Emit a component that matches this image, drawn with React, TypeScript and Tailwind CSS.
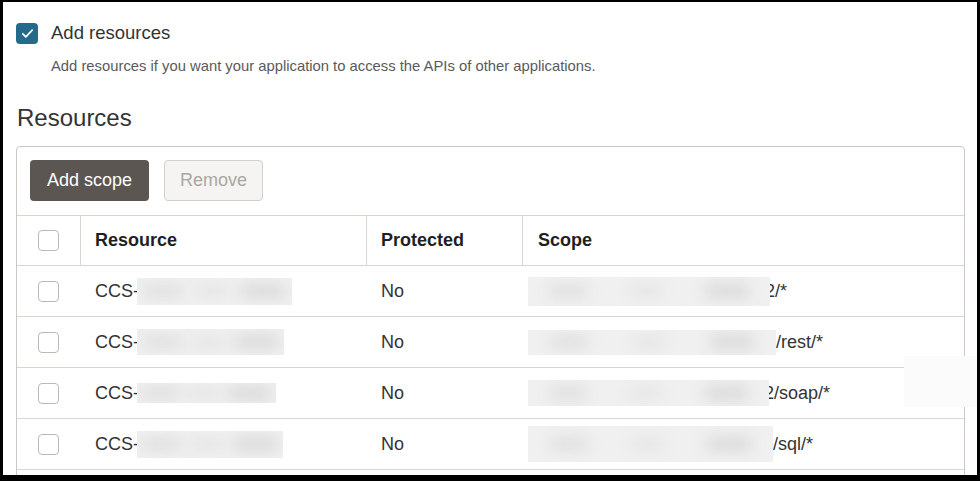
import React from "react";

// ---------------------------------------------------------------------------
// Data
// ---------------------------------------------------------------------------

type Row = {
  res: { w: number; h: number };
  scope: { w: number; h: number; tail: string; overlap: boolean };
};

const rows: Row[] = [
  { res: { w: 155, h: 27 }, scope: { w: 242, h: 29, tail: "2/*", overlap: true } },
  { res: { w: 147, h: 26 }, scope: { w: 248, h: 25, tail: "/rest/*", overlap: false } },
  { res: { w: 139, h: 20 }, scope: { w: 241, h: 26, tail: "2/soap/*", overlap: true } },
  { res: { w: 146, h: 27 }, scope: { w: 245, h: 36, tail: "/sql/*", overlap: false } },
];

const font = { fontFamily: '"Liberation Sans", Arial, sans-serif' };

// ---------------------------------------------------------------------------
// Bits
// ---------------------------------------------------------------------------

function Box() {
  return (
    <span className="block h-[21px] w-[21px] rounded-[4px] border border-[#bdbab6] bg-white" />
  );
}

// blurred redaction patch
function Redacted({ w, h }: { w: number; h: number }) {
  return (
    <span
      className="relative z-10 flex items-center justify-around overflow-hidden bg-[#f0f0f0]"
      style={{ width: w, height: h }}
    >
      <span className="h-[14px] w-[40px] rounded-full bg-[#e0e0e0] blur-[7px]" />
      <span className="h-[12px] w-[34px] rounded-full bg-[#e5e5e5] blur-[7px]" />
      <span className="h-[16px] w-[46px] rounded-full bg-[#dcdcdc] blur-[7px]" />
    </span>
  );
}

// ---------------------------------------------------------------------------
// App
// ---------------------------------------------------------------------------

export default function App() {
  return (
    <div className="h-[481px] w-[980px] bg-black pt-[2px] pl-[3px]" style={font}>
      <div className="relative h-[473px] w-[974px] overflow-hidden bg-white pt-[20px] pl-[13px] text-[#333]">
        <div className="flex items-center gap-[13px]">
          <span className="flex h-[21px] w-[22px] items-center justify-center rounded-[4px] bg-[#246a8b]">
            <svg viewBox="0 0 16 16" className="h-[15px] w-[15px]" fill="none">
              <path
                d="M3 8.3l3.2 3.2L13 4.5"
                stroke="white"
                strokeWidth="1.9"
                strokeLinecap="round"
                strokeLinejoin="round"
              />
            </svg>
          </span>
          <span className="text-[18.5px] leading-[22px]">Add resources</span>
        </div>
        <p className="mt-[14px] pl-[35px] text-[14.8px] leading-[17px] text-[#5a5a5a]">
          Add resources if you want your application to access the APIs of other applications.
        </p>

        <h2 className="mt-[29px] pl-[1px] text-[24px] leading-[28px] text-[#333]">Resources</h2>

        <div className="mt-[14px] w-[949px] rounded-[4px] border border-[#cbc8c4]">
          <div className="flex gap-[15px] px-[13px] pt-[13px] pb-[14px]">
            <button
              type="button"
              className="h-[41px] w-[119px] rounded-[4px] bg-[#5b5651] text-[18px] text-white"
            >
              Add scope
            </button>
            <button
              type="button"
              className="h-[41px] w-[99px] rounded-[4px] border border-[#d2cfcb] bg-[#f5f4f2] text-[18px] text-[#a9a7a4]"
            >
              Remove
            </button>
          </div>

          <div className="grid h-[50px] grid-cols-[63px_286px_156px_1fr] border-t border-[#d9d6d2] text-[18px] font-bold text-[#1f1f1f]">
            <div className="flex items-center pl-[21px]">
              <Box />
            </div>
            <div className="flex items-center border-l border-[#d9d6d2] pl-[14px]">Resource</div>
            <div className="flex items-center border-l border-[#d9d6d2] pl-[14px]">Protected</div>
            <div className="flex items-center border-l border-[#d9d6d2] pl-[15px]">Scope</div>
          </div>

          {rows.map((r, i) => (
            <div
              key={i}
              className="grid h-[51px] grid-cols-[63px_286px_156px_1fr] border-t border-[#d9d6d2] text-[18px]"
            >
              <div className="flex items-center pl-[21px]">
                <Box />
              </div>
              <div className="flex items-center pl-[15px]">
                <span>CCS-</span>
                <span className="-ml-[2px]">
                  <Redacted w={r.res.w} h={r.res.h} />
                </span>
              </div>
              <div className="flex items-center pl-[15px]">No</div>
              <div className="flex items-center pl-[6px]">
                <Redacted w={r.scope.w} h={r.scope.h} />
                <span className={r.scope.overlap ? "-ml-[5px]" : ""}>{r.scope.tail}</span>
              </div>
            </div>
          ))}

          <div className="h-[40px] border-t border-[#d9d6d2]" />
        </div>

        {/* faint patch over the right edge */}
        <div className="absolute top-[354px] right-0 h-[51px] w-[73px] bg-[#fbfbfb]" />
      </div>
    </div>
  );
}
